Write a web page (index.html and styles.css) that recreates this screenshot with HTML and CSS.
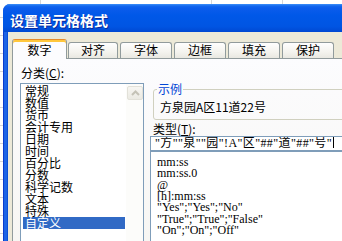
FILE: index.html
```html
<!DOCTYPE html>
<html lang="zh-CN">
<head>
<meta charset="utf-8">
<title>设置单元格格式</title>
<link rel="stylesheet" href="styles.css">
</head>
<body>
<div class="window">
  <div class="titlebar"><span class="title">设置单元格格式</span></div>
  <div class="client">
    <div class="tabs">
      <div class="tab active">数字</div>
      <div class="tab">对齐</div>
      <div class="tab">字体</div>
      <div class="tab">边框</div>
      <div class="tab">填充</div>
      <div class="tab">保护</div>
    </div>
    <div class="panel">
      <div class="col-left">
        <div class="label">分类(<u>C</u>):</div>
        <div class="listbox">
          <ul class="cat-list">
            <li>常规</li>
            <li>数值</li>
            <li>货币</li>
            <li>会计专用</li>
            <li>日期</li>
            <li>时间</li>
            <li>百分比</li>
            <li>分数</li>
            <li>科学记数</li>
            <li>文本</li>
            <li>特殊</li>
            <li class="selected">自定义</li>
          </ul>
          <div class="scrollbar">
            <div class="sb-btn">
              <svg width="9" height="6" viewBox="0 0 9 6"><polyline points="1,5 4.5,1.5 8,5" fill="none" stroke="#c4c2b6" stroke-width="2"/></svg>
            </div>
          </div>
        </div>
      </div>
      <div class="col-right">
        <fieldset class="sample">
          <legend>示例</legend>
          <div class="sample-text">方泉园A区11道22号</div>
        </fieldset>
        <div class="label label-type">类型(<u>T</u>):</div>
        <div class="type-input">"方""泉""园"!A"区"##"道"##"号"<span class="caret"></span></div>
        <ul class="format-list">
          <li>mm:ss</li>
          <li>mm:ss.0</li>
          <li>@</li>
          <li>[h]:mm:ss</li>
          <li>"Yes";"Yes";"No"</li>
          <li>"True";"True";"False"</li>
          <li>"On";"On";"Off"</li>
        </ul>
      </div>
    </div>
  </div>
</div>
</body>
</html>
```
FILE: styles.css
```css
* { box-sizing: border-box; }
html, body { margin: 0; padding: 0; }
body {
  width: 342px;
  height: 241px;
  overflow: hidden;
  background-color: #fff;
  background-image:
    linear-gradient(to right, transparent 40px, #d6d6d6 40px, #d6d6d6 41px, transparent 41px),
    linear-gradient(to right, transparent 211px, #d6d6d6 211px, #d6d6d6 212px, transparent 212px),
    linear-gradient(to right, transparent 282px, #d6d6d6 282px, #d6d6d6 283px, transparent 283px),
    repeating-linear-gradient(to bottom, transparent 0, transparent 17px, #d6d6d6 17px, #d6d6d6 18px);
  font-family: "Noto Sans CJK SC", sans-serif;
  font-size: 12px;
  color: #000;
}
.window {
  margin: 4px 0 0 3px;
  width: 400px;
  height: 260px;
  display: flex;
  flex-direction: column;
  border-radius: 7px 7px 0 0;
  background: linear-gradient(to right, #0a3ccc 0, #0a3ccc 1px, #1c64e6 1px, #1c64e6 4px, #0b50d6 4px);
  overflow: hidden;
}
.titlebar {
  height: 28px;
  flex: none;
  padding: 3px 0 0 7px;
  display: flex;
  align-items: center;
  background: linear-gradient(to bottom, #3d8ff8 0, #1468ee 2px, #0b5cec 4px, #0058e8 40%, #0055e3 80%, #0048d2 100%);
}
.title {
  color: #fff;
  font-weight: 700;
  font-size: 14px;
  line-height: 14px;
  text-shadow: 1px 1px 0 #0b2a9c;
}
.client {
  flex: 1;
  margin-left: 5px;
  background: #ece9d8;
  padding: 7px 0 0 4px;
  display: flex;
  flex-direction: column;
}
.tabs {
  display: flex;
  align-items: flex-end;
  height: 19px;
  flex: none;
}
.tab {
  width: 52px;
  height: 16px;
  margin-left: 2px;
  border: 1px solid #919b9c;
  border-bottom: none;
  border-radius: 3px 3px 0 0;
  background: linear-gradient(#fefefe, #f4f3ee 60%, #e9e8e1);
  text-align: center;
  line-height: 14px;
  white-space: nowrap;
}
.tab.active {
  width: 55px;
  height: 20px;
  margin-left: 0;
  margin-right: -1px;
  margin-bottom: -1px;
  border-top: 1px solid #e68b2c;
  box-shadow: inset 0 2px 0 #ffc73c;
  background: #fcfcfe;
  padding-top: 2px;
  line-height: 16px;
  position: relative;
  z-index: 1;
}
.tab.active + .tab { width: 50px; }
.panel {
  flex: 1;
  border: 1px solid #919b9c;
  background: linear-gradient(#fcfcfe, #f6f5f1);
  padding: 8px 0 0 7px;
  display: flex;
  gap: 6px;
  align-items: flex-start;
}
.col-left { width: 124px; flex: none; }
.label {
  height: 12px;
  line-height: 12px;
  padding-left: 1px;
  white-space: nowrap;
}
.listbox {
  margin-top: 4px;
  border: 1px solid #7f9db9;
  background: #fff;
  display: flex;
  height: 190px;
}
.cat-list {
  list-style: none;
  margin: 0;
  padding: 1px 1px 0 2px;
  flex: 1;
}
.cat-list li {
  height: 12px;
  line-height: 12px;
  padding-left: 2px;
  white-space: nowrap;
}
.cat-list li.selected { background: #316ac5; color: #fff; }
.scrollbar { width: 17px; flex: none; background: #fcfcfa; }
.sb-btn {
  margin: 2px 0 0 1px;
  width: 16px;
  height: 14px;
  border: 1px solid #e2e1d9;
  border-radius: 2px;
  background: linear-gradient(#f7f6f2, #ebeae3);
  display: flex;
  align-items: center;
  justify-content: center;
}
.col-right { width: 210px; flex: none; }
.sample {
  margin: 16px 0 0 3px;
  padding: 6px 0 6px 6px;
  border: 1px solid #d0d0bf;
  border-radius: 3px;
  min-width: 0;
  width: 207px;
}
.sample legend {
  margin-left: -3px;
  padding: 0 1px;
  color: #0046d5;
  line-height: 12px;
  font-size: 12px;
}
.sample-text { line-height: 12px; white-space: nowrap; }
.label-type { margin: 3px 0 0 3px; padding-left: 0; }
.type-input {
  margin-top: 1px;
  height: 15px;
  border: 1px solid #7f9db9;
  background: #fff;
  padding-left: 4px;
  line-height: 13px;
  white-space: nowrap;
  font-family: "Liberation Serif", "Noto Sans CJK SC", serif;
  letter-spacing: 0.4px;
  overflow: hidden;
}
.caret {
  display: inline-block;
  width: 1px;
  height: 11px;
  background: #000;
  vertical-align: -1px;
  margin-left: 1px;
}
.format-list {
  list-style: none;
  margin: 0;
  border: 1px solid #7f9db9;
  background: #fff;
  padding: 5px 0 0 6px;
  height: 100px;
  font-family: "Liberation Serif", "Noto Sans CJK SC", serif;
}
.format-list li {
  height: 11.33px;
  line-height: 11.33px;
  white-space: nowrap;
}
```
